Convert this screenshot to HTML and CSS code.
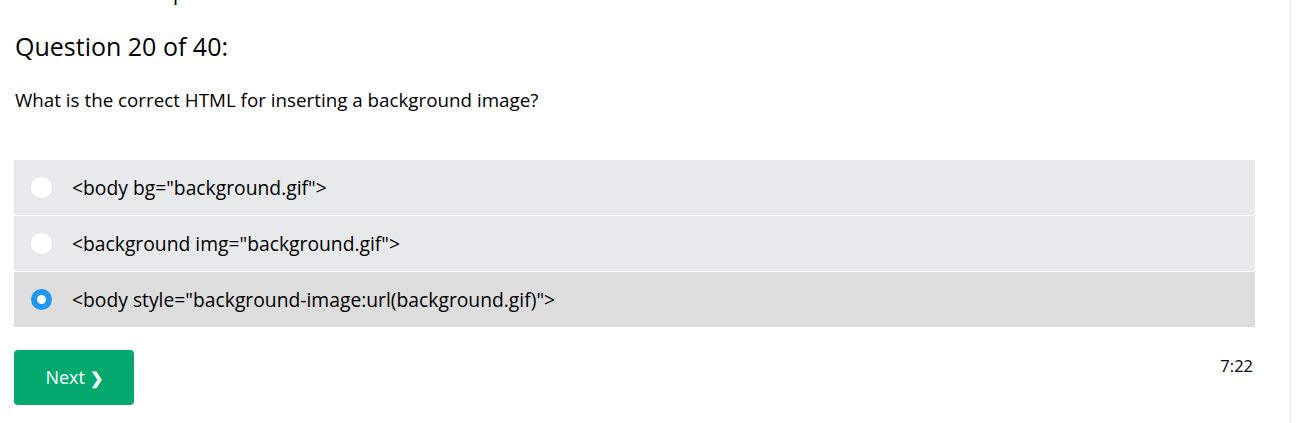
FILE: index.html
```html
<!DOCTYPE html>
<html>
<head>
<meta charset="utf-8">
<link rel="stylesheet" href="styles.css">
</head>
<body>
<div class="page">
  <div class="main">
    <div class="prev-line">p</div>
    <h2 class="qnum">Question 20 of 40:</h2>
    <p class="qtext">What is the correct HTML for inserting a background image?</p>
    <div class="options">
      <label class="opt"><span class="radio"></span><span class="opt-text">&lt;body bg="background.gif"&gt;</span></label>
      <label class="opt"><span class="radio"></span><span class="opt-text">&lt;background img="background.gif"&gt;</span></label>
      <label class="opt selected"><span class="radio checked"></span><span class="opt-text">&lt;body style="background-image:url(background.gif)"&gt;</span></label>
    </div>
    <div class="footer">
      <button class="next">Next <span class="chev">&#10095;</span></button>
      <div class="timer">7:22</div>
    </div>
  </div>
  <div class="side"></div>
</div>
</body>
</html>
```
FILE: styles.css
```css
html, body {
  margin: 0;
  padding: 0;
  background: #fff;
}
body {
  font-family: "Open Sans", "Noto Sans", sans-serif;
  color: #000;
}
.page {
  display: flex;
  height: 423px;
  overflow: hidden;
}
.main {
  width: 1241px;
  padding: 0 35px 0 14px;
  position: relative;
}
.side {
  width: 1px;
  height: 423px;
  background: #ececec;
}
.prev-line {
  position: absolute;
  left: 173px;
  top: -15px;
  font-size: 20px;
  line-height: 16px;
}
.qnum {
  margin: 0;
  padding-top: 30px;
  font-size: 25px;
  font-weight: 400;
  line-height: 32px;
  padding-left: 1px;
}
.qtext {
  margin: 25px 0 0 1px;
  font-size: 18.8px;
  line-height: 26px;
}
.options {
  margin-top: 47px;
  display: flex;
  flex-direction: column;
  gap: 1px;
}
.opt {
  display: flex;
  align-items: center;
  height: 55px;
  background: #e7e9eb;
  font-size: 19.3px;
}
.opt.selected {
  background: #dddddd;
}
.radio {
  width: 21px;
  height: 21px;
  border-radius: 50%;
  background: #fff;
  margin-left: 17px;
  margin-right: 20px;
  box-sizing: border-box;
  flex: none;
}
.radio.checked {
  background: #fff;
  border: 6.5px solid #2196f3;
}
.footer {
  display: flex;
  justify-content: space-between;
  align-items: flex-start;
  margin-top: 23px;
}
.next {
  width: 120px;
  height: 55px;
  background: #04aa6d;
  color: #fff;
  border: none;
  border-radius: 4px;
  font-family: "Open Sans", "Noto Sans", sans-serif;
  font-size: 18px;
  padding: 0 0 2px;
}
.chev {
  font-size: 16px;
  font-weight: 700;
}
.timer {
  font-size: 16.5px;
  margin-top: 4px;
  margin-right: 2px;
}
```
